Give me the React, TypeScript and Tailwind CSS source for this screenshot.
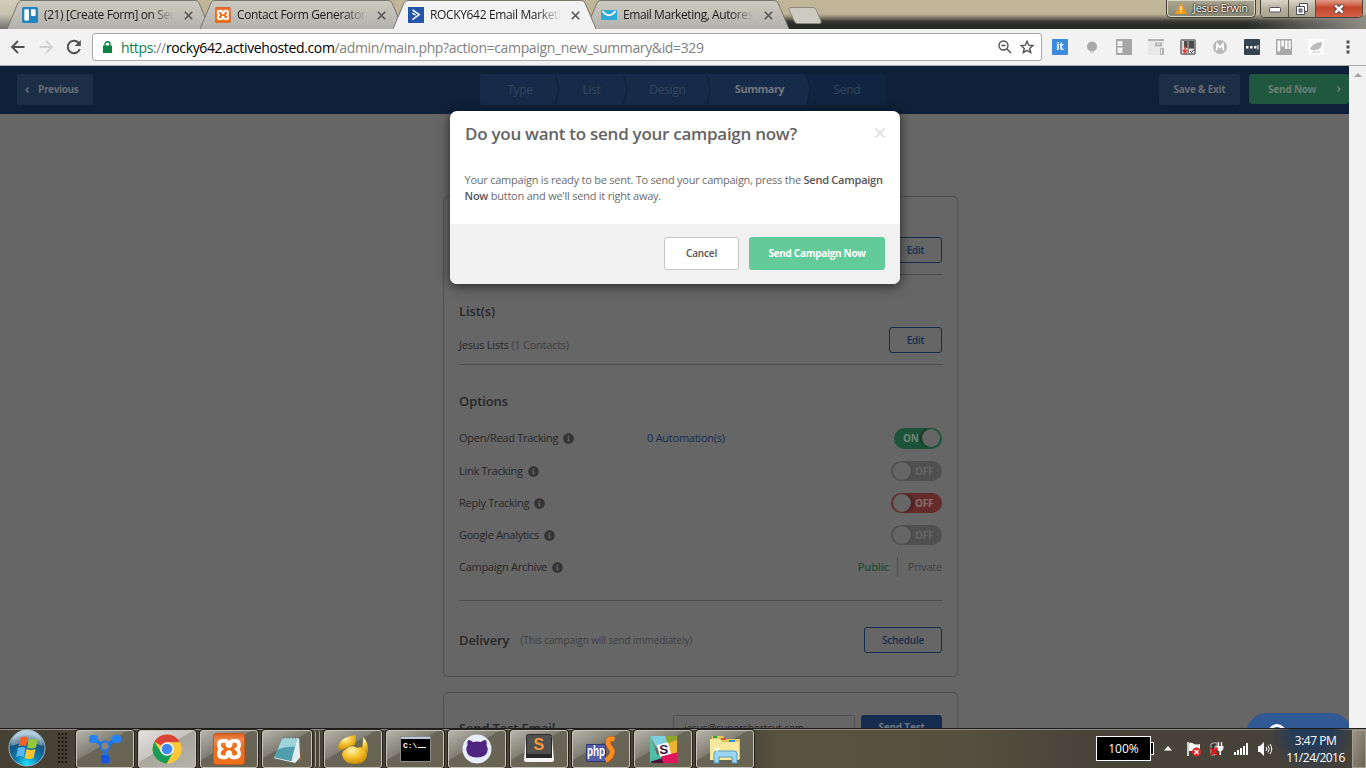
import React from "react";
import { FaInfoCircle } from "react-icons/fa";

const ui = "font-['Open_Sans','Noto_Sans',sans-serif]";

/* ---------- Small shared icons ---------- */

function TrelloIcon() {
  return (
    <svg viewBox="0 0 16 16" className="size-4 shrink-0">
      <rect width="16" height="16" rx="1.5" fill="#2484c0" />
      <rect x="2.3" y="2.3" width="4.6" height="11.2" rx="0.8" fill="#fff" />
      <rect x="9" y="2.3" width="4.6" height="6.6" rx="0.8" fill="#fff" />
    </svg>
  );
}

function XamppIcon({ size }: { size: number }) {
  return (
    <svg viewBox="0 0 32 32" width={size} height={size} className="shrink-0">
      <defs>
        <linearGradient id="xo" x1="0" y1="0" x2="0" y2="1">
          <stop offset="0" stopColor="#d9601f" />
          <stop offset="0.2" stopColor="#f08a4c" />
          <stop offset="0.45" stopColor="#ee6d1c" />
          <stop offset="1" stopColor="#f0701c" />
        </linearGradient>
      </defs>
      <rect x="0.5" y="0.5" width="31" height="31" rx="3" fill="url(#xo)" stroke="#c8591a" />
      <path
        d="M9.5 7.8h2.6q2.4 0 2.4 3.4 0 1.9 1.5 1.9t1.5-1.9q0-3.4 2.4-3.4h2.6q3.6 0 3.600 3.900 0 2.900-2 4.300 2 1.500 2 4.300 0 4-3.600 4h-2.800q-2.300 0-2.300-3.200 0-1.900-1.400-1.900t-1.400 1.900q0 3.200-2.300 3.200h-2.800q-3.600 0-3.600-4 0-2.800 2-4.300-2-1.400-2-4.300 0-3.900 3.600-3.900z"
        fill="none"
        stroke="#fff"
        strokeWidth="3.8"
      />
    </svg>
  );
}

function ActiveIcon() {
  return (
    <svg viewBox="0 0 16 16" className="size-4 shrink-0">
      <rect width="16" height="16" fill="#2356ab" />
      <path d="M4.5 2.8 11.2 7.6 4.5 12.6M4.3 6l3.2 2.2" fill="none" stroke="#fff" strokeWidth="1.5" />
    </svg>
  );
}

function MailIcon() {
  return (
    <svg viewBox="0 0 16 16" className="size-4 shrink-0">
      <rect y="3" width="16" height="10" fill="#2fa9d6" />
      <path d="M1.500 4Q8 12.500 14.500 4" fill="none" stroke="#fff" strokeWidth="1.900" />
    </svg>
  );
}

/* ---------- Browser window ---------- */

type TabProps = {
  icon: React.ReactNode;
  title: string;
  active?: boolean;
  className: string;
  titleClass: string;
};

function Tab({ icon, title, active, className, titleClass }: TabProps) {
  return (
    <div className={`relative flex h-[29px] shrink-0 items-center pt-px ${active ? "z-10" : ""} ${className}`}>
      <svg viewBox="0 0 204 29" preserveAspectRatio="none" className="absolute inset-0 -z-10 h-full w-full">
        <path d="M0 29 11 3Q12 .5 15 .5H189Q192 .5 193 3L204 29Z" fill={active ? "#f2f2f2" : "url(#tabfill)"} />
        <path d="M0 29 11 3Q12 .5 15 .5H189Q192 .5 193 3L204 29" fill="none" stroke="#777770" strokeWidth="1" />
      </svg>
      <span className="flex pl-[15px]">{icon}</span>
      <span
        className={`ml-[6px] overflow-hidden whitespace-nowrap text-[12px] text-[#1c1c1c] [mask-image:linear-gradient(90deg,#000_82%,transparent)] ${titleClass}`}
      >
        {title}
      </span>
      <svg viewBox="0 0 9 9" className="ml-[10px] size-[9px] shrink-0">
        <path d="m.8.8 7.4 7.4m0-7.4L.8 8.2" stroke="#555" strokeWidth="1.6" />
      </svg>
    </div>
  );
}

function WindowControls() {
  return (
    <div className="absolute right-[3px] top-0 flex items-start gap-[4px]">
      <div className="flex h-[18px] w-[90px] items-center rounded-b-[5px] border border-t-0 border-[#44413a] bg-linear-to-b from-[#aaa58f] to-[#8b8776] pb-px pl-[8px] shadow-[inset_0_0_0_1px_#d8d4c4]">
        <svg viewBox="0 0 12 11" className="h-[11px] w-[12px]">
          <path d="M6 0 12 11H0Z" fill="#f39a12" />
          <path d="M6 3.5v3.7M6 8.2v1.4" stroke="#fff" strokeWidth="1.3" />
        </svg>
        <span className="ml-[6px] whitespace-nowrap text-[11px] tracking-[-0.3px] text-white [text-shadow:0_0_2px_#000,0_0_2px_#000]">
          Jesus Erwin
        </span>
      </div>
      <div className="flex h-[18px] overflow-hidden rounded-b-[5px] border border-t-0 border-[#44413a] shadow-[inset_0_0_0_1px_#d8d4c4]">
        <div className="flex w-[28px] items-center justify-center border-r border-[#555145] bg-linear-to-b from-[#d8d5ca] via-[#b6b1a0] via-50% to-[#a8a390]">
          <svg viewBox="0 0 12 6" className="mt-[3px] h-[6px] w-[12px]">
            <rect x=".5" y=".5" width="11" height="4.5" rx="1" fill="#fff" stroke="#4d4f5c" />
          </svg>
        </div>
        <div className="flex w-[27px] items-center justify-center border-r border-[#555145] bg-linear-to-b from-[#d8d5ca] via-[#b6b1a0] via-50% to-[#a8a390]">
          <svg viewBox="0 0 12 12" className="size-[12px]">
            <path d="M3.5.5h8v8h-8z" fill="#fff" stroke="#4d4f5c" />
            <path d="M.5 3.5h8v8h-8z" fill="#fff" stroke="#4d4f5c" />
            <path d="M3 6h3v3H3z" fill="#aaa795" stroke="#4d4f5c" />
          </svg>
        </div>
        <div className="flex w-[46px] items-center justify-center bg-linear-to-b from-[#df9b87] via-[#c4452b] via-45% to-[#d2614a]">
          <svg viewBox="0 0 12 10" className="h-[10px] w-[12px]">
            <path d="m2 1 8 8m0-8L2 9" stroke="#4b3f46" strokeWidth="4.4" />
            <path d="m2.3 1.3 7.4 7.4m0-7.4L2.3 8.7" stroke="#fff" strokeWidth="2.6" />
          </svg>
        </div>
      </div>
    </div>
  );
}

function TabStrip() {
  return (
    <div className="relative isolate flex h-[29px] bg-[linear-gradient(180deg,#c2b699_0,#bfb397_14px,#8d8672_17px,#3d3c35_21px,#282a26_25px,#2b2d29_29px)] pl-[7px]">
      <div className="absolute right-0 top-[17px] -z-20 h-[12px] w-[120px] bg-linear-to-r from-transparent to-[#8e8d86]" />
      <div className="absolute left-0 top-0 -z-20 h-[29px] w-[20px] bg-linear-to-b from-[#d3cdba] via-[#c6c0ae] to-[#72736f]" />
      <svg className="absolute size-0">
        <defs>
          <linearGradient id="tabfill" x1="0" y1="0" x2="0" y2="1">
            <stop offset="0" stopColor="#cdcabf" />
            <stop offset="1" stopColor="#b2b1ad" />
          </linearGradient>
        </defs>
      </svg>
      <Tab icon={<TrelloIcon />} title="(21) [Create Form] on Sendpepper" className="w-[203px]" titleClass="w-[130px] tracking-[-0.4px]" />
      <Tab icon={<XamppIcon size={16} />} title="Contact Form Generator" className="-ml-[10px] w-[203px]" titleClass="w-[130px] tracking-[-0.35px]" />
      <Tab icon={<ActiveIcon />} title="ROCKY642 Email Marketing" active className="-ml-[10px] w-[203px]" titleClass="w-[131px] tracking-[-0.35px]" />
      <Tab icon={<MailIcon />} title="Email Marketing, Autoresponder" className="-ml-[10px] w-[203px]" titleClass="w-[131px] tracking-[-0.43px]" />
      <svg viewBox="0 0 34 17" className="-ml-px mt-[7px] h-[17px] w-[34px]">
        <path d="M3 .5H25Q27 .5 28 2.5L33 14Q34 16.5 31 16.5H9.500Q7.500 16.500 6.500 14.500L1 2.500Q.5.5 3 .5Z" fill="#cdcabf" stroke="#8d8a7d" />
      </svg>
      <WindowControls />
    </div>
  );
}

function Extensions() {
  return (
    <div className="flex items-center gap-4">
      <span className="flex size-4 items-center justify-center rounded-[1px] bg-[#3b8adb] pb-px text-[10px] font-bold text-white">it</span>
      <svg viewBox="0 0 16 16" className="size-4">
        <circle cx="8" cy="7.500" r="5" fill="#a9a9a9" />
        <path d="M6 12h4v2H6z" fill="#d5d5d5" />
      </svg>
      <svg viewBox="0 0 16 16" className="size-4">
        <path d="M0 0h16v16H0z" fill="#a5a5a5" />
        <path d="M1.500 2h5v5h-5zM1.500 8.500h5v5.500h-5z" fill="#f2f2f2" />
      </svg>
      <svg viewBox="0 0 16 16" className="size-4">
        <path d="M0 2h16v14H0z" fill="#e8e8e8" />
        <path d="M0 0h16v2H0zM7 3.500h7v4H7zM12 9h4v7h-4z" fill="#b5b5b5" />
        <path d="M9 5h3M13.500 10v5" stroke="#eee" />
      </svg>
      <svg viewBox="0 0 16 16" className="size-4">
        <rect width="16" height="16" rx="2" fill="#888" />
        <path d="M2 2h5.500v12H2z" fill="#d6d6d6" />
        <path d="M4 2h3.500v7H4zM9 2h5v7H9z" fill="#4c4c4c" />
        <path d="M9 10h5v4H9z" fill="#eee" />
        <path d="M5 7v6M3 11l2 3 2-3" stroke="#db4340" strokeWidth="1.500" fill="none" />
        <path d="m10 12 1.500 1.500L14 10.500" stroke="#333" fill="none" />
      </svg>
      <svg viewBox="0 0 16 16" className="size-4">
        <circle cx="8" cy="8" r="7" fill="#b8b8b8" />
        <path d="M4.500 11.500 5.200 5 8 8.500 10.800 5l.7 6.500" fill="none" stroke="#fff" strokeWidth="1.800" />
      </svg>
      <svg viewBox="0 0 16 16" className="size-4">
        <rect width="16" height="16" rx="1" fill="#344450" />
        <path d="M2 7h2.500v2.500H2zM6 7h2.500v2.500H6zM10 7h2.500v2.500H10zM13.500 6h1v4.500h-1z" fill="#fff" />
      </svg>
      <svg viewBox="0 0 16 16" className="size-4">
        <path d="M0 0h16v16H0z" fill="#a9a9a9" />
        <path d="M1.500 1.500h2.700v11H1.500zM5.300 1.500H8v6H5.300zM9 1.500h2.500V10H9zM12.500 1.500h2.200v8.500h-2.200z" fill="#f8f8f8" />
      </svg>
      <svg viewBox="0 0 16 16" className="size-4">
        <path d="M0 0h16v16H0z" fill="#fbfbfb" />
        <path d="M2 10Q4 4 14 3q0 7-6 8-4 .6-6-1Z" fill="#bdbdbd" />
        <path d="M4 13h8" stroke="#ddd" strokeWidth="1.500" />
      </svg>
    </div>
  );
}

function Toolbar() {
  return (
    <div className="flex h-[37px] items-center border-b border-[#a9aaac] bg-[#f2f2f2] pr-[16px]">
      <svg viewBox="0 0 16 16" className="ml-[10px] size-4">
        <path d="M14.500 8H2.500M8 2 2 8l6 6" fill="none" stroke="#505050" strokeWidth="1.800" />
      </svg>
      <svg viewBox="0 0 16 16" className="ml-[12px] size-4">
        <path d="M1.500 8h12M8 2l6 6-6 6" fill="none" stroke="#d0d0d0" strokeWidth="1.800" />
      </svg>
      <svg viewBox="0 0 16 16" className="ml-[12px] size-4">
        <path d="M13.800 10A6.200 6.200 0 1 1 12.500 3.800" fill="none" stroke="#505050" strokeWidth="2" />
        <path d="M14.800 1v6h-6z" fill="#505050" />
      </svg>
      <div className="ml-[10px] flex h-[28px] w-[950px] items-center rounded-[3px] border border-[#a9a9a9] bg-white pl-[10px] pr-[7px]">
        <svg viewBox="0 0 9 12" className="h-[12px] w-[9px]">
          <path d="M0 4.500h9V12H0z" fill="#0b8043" />
          <path d="M2 5V3.200a2.500 2.500 0 0 1 5 0V5" fill="none" stroke="#0b8043" strokeWidth="1.400" />
        </svg>
        <span className="ml-[9px] whitespace-nowrap text-[14px] tracking-[-0.36px] text-[#818181]">
          <span className="text-[#0b8043]">https</span>://
          <span className="text-black">rocky642.activehosted.com</span>/admin/main.php?action=campaign_new_summary&amp;id=329
        </span>
        <svg viewBox="0 0 14 14" className="ml-auto size-[14px]">
          <circle cx="5.500" cy="5.500" r="4.500" fill="none" stroke="#505050" strokeWidth="1.400" />
          <path d="M3.500 5.500h4M9 9l4 4" stroke="#505050" strokeWidth="1.500" />
        </svg>
        <svg viewBox="0 0 14 14" className="ml-[8px] size-[14px]">
          <path d="m7 1.300 1.700 3.900 4.200.4-3.200 2.800 1 4.200L7 10.400l-3.700 2.200 1-4.200L1.100 5.600l4.200-.4Z" fill="none" stroke="#505050" strokeWidth="1.400" />
        </svg>
      </div>
      <div className="ml-[10px]">
        <Extensions />
      </div>
      <svg viewBox="0 0 4 14" className="ml-auto h-[14px] w-[4px]">
        <path d="M.5.5h3v3h-3zM.5 5.500h3v3h-3zM.5 10.500h3v3h-3z" fill="#505050" />
      </svg>
    </div>
  );
}

/* ---------- Campaign page ---------- */

function Step({ label, className, last, current }: { label: string; className: string; last?: boolean; current?: boolean }) {
  return (
    <div
      className={`relative flex h-[31px] items-center justify-center ${last ? "bg-[#10253f]" : "bg-[#152b49]"} ${current ? "text-[11px] font-bold text-[#73777d]" : "text-[12px] text-[#34465c]"} ${className}`}
    >
      {label}
      {!last && (
        <svg viewBox="0 0 5 31" className="absolute -right-[4px] top-0 z-10 h-[31px] w-[5px]">
          <path d="M0 0 4 15.500 0 31Z" fill="#152b49" />
          <path d="M.5 0 4 15.500.5 31" fill="none" stroke="#0e2038" />
        </svg>
      )}
    </div>
  );
}

function PageHeader() {
  return (
    <header className="flex h-[48px] items-start bg-[#0f2139] pt-[8px] text-[10px] text-[#6f757c]">
      <button className="ml-[17px] flex h-[31px] w-[76px] items-center rounded-[3px] bg-[#1c2e46] pl-[8px] font-bold tracking-[-0.35px] text-[#686d73]">
        <svg viewBox="0 0 4 6" className="mr-[9px] h-[6px] w-[4px]">
          <path d="M3.500.5 1 3l2.500 2.500" fill="none" stroke="#777b80" strokeWidth="1.200" />
        </svg>
        Previous
      </button>
      <nav className="ml-[387px] flex tracking-[-0.3px]">
        <Step label="Type" className="w-[76px] rounded-l-[3px] pl-[4px]" />
        <Step label="List" className="w-[68px] pl-[3px]" />
        <Step label="Design" className="w-[83px] pl-[4px]" />
        <Step label="Summary" current className="w-[100px] pl-[5px] tracking-[-0.5px]" />
        <Step label="Send" last className="w-[79px] rounded-r-[3px] pl-px" />
      </nav>
      <button className="ml-auto h-[31px] w-[81px] rounded-[3px] bg-[#1c2e46] font-bold tracking-[-0.25px] text-[#686d73]">Save &amp; Exit</button>
      <button className="ml-[9px] flex h-[30px] w-[100px] items-center rounded-[3px] bg-[#20573f] pl-[19px] font-bold tracking-[-0.2px] text-[#6a7f74]">
        Send Now
        <svg viewBox="0 0 4 6" className="ml-auto mr-[8px] h-[6px] w-[4px]">
          <path d="M.5.5 3 3 .5 5.500" fill="none" stroke="#76877e" strokeWidth="1.200" />
        </svg>
      </button>
    </header>
  );
}

function OutlineButton({ label, className }: { label: string; className: string }) {
  return (
    <button className={`h-[26px] rounded-[3px] border border-[#172d4f] text-[10px] font-semibold text-[#172d4f] ${className}`}>{label}</button>
  );
}

type ToggleKind = "on" | "off" | "danger";

function Toggle({ kind }: { kind: ToggleKind }) {
  if (kind === "on") {
    return (
      <span className="flex h-[21px] w-[48px] items-center rounded-full bg-[#1c5339] pl-[9px] text-[10px] font-bold text-[#708479]">
        ON
        <span className="ml-auto mr-[2px] size-[18px] rounded-full bg-[#666] shadow-[-3px_0_2px_#163f2c]" />
      </span>
    );
  }
  return (
    <span
      className={`flex h-[20px] w-[51px] items-center rounded-full pl-[2px] text-[10px] font-bold ${kind === "off" ? "bg-[#505050] text-[#666]" : "bg-[#652b2b] text-[#86706f]"}`}
    >
      <span className={`mr-[4px] size-[18px] rounded-full bg-[#666] ${kind === "off" ? "shadow-[1px_0_1px_#484848]" : "shadow-[3px_0_2px_#4f2222]"}`} />
      OFF
    </span>
  );
}

function OptionRow({ label, extra, kind }: { label: string; extra?: string; kind?: ToggleKind }) {
  return (
    <div className="relative flex h-[32px] items-center">
      <span className="tracking-[-0.27px]">{label}</span>
      <FaInfoCircle className="ml-[5px] size-[11px] text-[#343434]" />
      {extra && <span className="absolute left-[188px] tracking-[-0.25px] text-[#172d4f]">{extra}</span>}
      <span className="ml-auto">
        {kind ? (
          <Toggle kind={kind} />
        ) : (
          <span className="flex h-[20px] items-center text-[#3f3f3f]">
            <b className="border-r border-[#505050] pr-[8px] leading-[20px] font-semibold text-[#1c4f37]">Public</b>
            <span className="pl-[10px]">Private</span>
          </span>
        )}
      </span>
    </div>
  );
}

function SummaryPanel() {
  return (
    <section className="mt-[82px] h-[481px] w-[515px] rounded-[5px] border border-[#505050] px-[15px] text-[11px] tracking-[-0.2px] text-[#262626]">
      <div className="flex h-[78px] items-end justify-end border-b border-[#4b4b4b] pb-[11px]">
        <OutlineButton label="Edit" className="w-[53px]" />
      </div>
      <h3 className="pt-[26px] text-[13px] leading-[20px] font-semibold tracking-[-0.1px]">List(s)</h3>
      <div className="flex h-[44px] items-start justify-between border-b border-[#4b4b4b] pt-[6px]">
        <span className="pt-[9px] leading-[18px] tracking-[-0.23px]">
          Jesus Lists <span className="text-[#3f3f3f]">(1 Contacts)</span>
        </span>
        <OutlineButton label="Edit" className="w-[53px]" />
      </div>
      <h3 className="pt-[26px] text-[13px] leading-[20px] font-semibold tracking-[-0.1px]">Options</h3>
      <div className="pt-[11px]">
        <OptionRow label="Open/Read Tracking" extra="0 Automation(s)" kind="on" />
        <div className="pt-px">
          <OptionRow label="Link Tracking" kind="off" />
          <OptionRow label="Reply Tracking" kind="danger" />
          <OptionRow label="Google Analytics" kind="off" />
          <OptionRow label="Campaign Archive" />
        </div>
      </div>
      <div className="mt-[17px] flex h-[79px] items-center border-t border-[#4b4b4b]">
        <h3 className="pt-[2px] text-[13px] font-semibold tracking-[-0.1px]">Delivery</h3>
        <span className="ml-[11px] pt-px text-[10px] tracking-[-0.12px] text-[#3f3f3f]">(This campaign will send immediately)</span>
        <OutlineButton label="Schedule" className="ml-auto w-[78px]" />
      </div>
    </section>
  );
}

function TestPanel() {
  return (
    <section className="mt-[15px] flex h-[120px] w-[515px] items-start rounded-[5px] border border-[#505050] px-[15px] pt-[22px] text-[#262626]">
      <h3 className="pt-[3px] text-[13px] leading-[20px] font-semibold tracking-[-0.15px]">Send Test Email</h3>
      <div className="ml-auto h-[27px] w-[182px] rounded-[3px] border border-[#505050] pl-[10px] pt-[3px] text-[10px] leading-[18px] tracking-[-0.05px] text-[#262626]">jesus@supershortcut.com</div>
      <button className="ml-[6px] h-[25px] w-[81px] rounded-[3px] bg-[#172d4f] text-[10px] font-bold tracking-[-0.2px] text-[#6f7782]">Send Test</button>
    </section>
  );
}

function Modal() {
  return (
    <div className="absolute left-[450px] top-[45px] z-20 h-[173px] w-[450px] overflow-hidden rounded-[7px] bg-white text-[#5b5b5b] shadow-[0_2px_12px_rgba(0,0,0,.65)]">
      <div className="h-[113px] px-[15px] pt-[11px]">
        <div className="flex justify-between">
          <h2 className="whitespace-nowrap text-[17px] leading-[24px] font-semibold tracking-[-0.27px] text-[#646464]">Do you want to send your campaign now?</h2>
          <svg viewBox="0 0 10 10" className="mt-[6px] size-[10px]">
            <path d="m.5.5 9 9m0-9-9 9" stroke="#d8d8d8" strokeWidth="1.500" />
          </svg>
        </div>
        <p className="-ml-[0.5px] mt-[26px] whitespace-nowrap text-[11px] leading-[16px] tracking-[-0.235px] text-[#6c6c6c]">
          Your campaign is ready to be sent. To send your campaign, press the <b className="font-semibold text-[#555]">Send Campaign</b>
          <br />
          <b className="font-semibold text-[#555]">Now</b> button and we'll send it right away.
        </p>
      </div>
      <div className="flex h-[60px] justify-end gap-[10px] bg-[#f1f1f1] pr-[15px] pt-[13px] text-[10px]">
        <button className="h-[33px] w-[75px] rounded-[3px] border border-[#c5c5c5] bg-white font-semibold tracking-[-0.15px] text-[#555]">Cancel</button>
        <button className="h-[33px] w-[136px] rounded-[3px] bg-[#62cb99] font-bold tracking-[-0.3px] text-white">Send Campaign Now</button>
      </div>
    </div>
  );
}

/* ---------- Taskbar ---------- */

function TaskButton({ children, className = "w-[58px]", active }: { children: React.ReactNode; className?: string; active?: boolean }) {
  return (
    <div
      className={`flex h-[38px] shrink-0 items-center justify-center rounded-[3px] border border-[#c6c3ba] shadow-[0_0_0_1px_#24221c] ${active ? "bg-[linear-gradient(150deg,#e2e1df_0,#c6c4bf_45%,#a9a69d_46%,#b5b2a8_100%)]" : "bg-[linear-gradient(150deg,#b6b3ab_0,#817e73_42%,#69665a_43%,#66634f_100%)]"} ${className}`}
    >
      {children}
    </div>
  );
}

function StartOrb() {
  return (
    <svg viewBox="0 0 38 38" className="size-[38px]">
      <defs>
        <radialGradient id="orb" cx=".5" cy=".95" r=".85">
          <stop offset="0" stopColor="#1fe2ff" />
          <stop offset=".4" stopColor="#0c7cad" />
          <stop offset=".8" stopColor="#174f7a" />
          <stop offset="1" stopColor="#8eb4cb" />
        </radialGradient>
      </defs>
      <circle cx="19" cy="19" r="18" fill="url(#orb)" stroke="#9fb6c4" />
      <path d="M3 17a16 16 0 0 1 32 0q-16-7-32 0Z" fill="#fff" opacity=".35" />
      <path d="M12.500 8.500q4-2 7.500 0l-2 9q-3.500-2-7.500 0Z" fill="#f0622c" />
      <path d="M21 9.500q4.500 2 9 0l-2 9q-4.500 2-9 0Z" fill="#95c93d" />
      <path d="M10 19q4-2 7.500 0l-2 9q-3.500-2-7.500 0Z" fill="#56b8ef" />
      <path d="M18.500 20q4.500 2 9 0l-2 9q-4.500 2-9 0Z" fill="#fdc62d" />
    </svg>
  );
}

function ChromeLogo() {
  return (
    <svg viewBox="0 0 30 30" className="size-[30px]">
      <circle cx="15" cy="15" r="14.500" fill="#fdc93a" />
      <path d="M15 15 2.400 7.800A14.500 14.500 0 0 1 27.800 8.200L15 8.200Z" fill="#da4437" />
      <path d="M2.400 7.800A14.500 14.500 0 0 0 15 29.500L21 18.500 15 15 9 18.300Z" fill="#179c5a" />
      <path d="M15 8.200H27.800A14.500 14.500 0 0 1 15 29.500L21 18.500Z" fill="#fdc93a" />
      <circle cx="15" cy="15" r="6.800" fill="#f4f4f4" />
      <circle cx="15" cy="15" r="5.300" fill="#4285f4" />
    </svg>
  );
}

function Taskbar() {
  return (
    <footer className="relative z-30 flex h-[40px] shrink-0 items-start border-t border-[#1e1c18] bg-[linear-gradient(90deg,#454135_0,#4b4739_55%,#59523f_57%,#575040_70%,#48443a_79%,#454138_100%)] shadow-[inset_0_1px_0_#8f8c82]">
      <div className="ml-[8px]"><StartOrb /></div>
      <svg viewBox="0 0 9 30" className="ml-[12px] mt-[4px] h-[30px] w-[9px]">
        {[0, 4, 8, 12, 16, 20, 24, 28].map((y) => (
          <path key={y} d={`M0 ${y}h2v1.800h-2zM3.500 ${y}h2v1.800h-2zM7 ${y}h2v1.800h-2z`} fill="#16150f" />
        ))}
      </svg>
      <div className="ml-[9px] flex gap-[4px] pt-px">
        <TaskButton>
          <svg viewBox="0 0 34 30" className="h-[30px] w-[34px]">
            <path d="M6 5 14 11M28 5 20 11M17 15v11" stroke="#2274e8" strokeWidth="4" />
            <circle cx="17" cy="12" r="4.500" fill="#8a877a" stroke="#2274e8" strokeWidth="2" />
            <rect x="1" y="1" width="9" height="8" rx="3" fill="#2483f4" />
            <rect x="24" y="1" width="9" height="8" rx="3" fill="#2483f4" />
            <rect x="13" y="21" width="8.500" height="8.500" rx="3" fill="#1557e0" />
          </svg>
        </TaskButton>
        <TaskButton active><ChromeLogo /></TaskButton>
        <TaskButton><XamppIcon size={32} /></TaskButton>
        <div className="flex">
          <TaskButton className="w-[50px]">
            <svg viewBox="0 0 32 30" className="size-[31px]">
              <path d="m26 4 5 22-4 2Z" fill="#84693c" />
              <path d="M11 3h17l1 20-5 6-22-5Z" fill="#e2edee" />
              <path d="M11 3h15l-6 24-18-4Z" fill="#4f9eae" />
              <path d="M11 3h15l-2 9Q13 12 6 15Z" fill="#9fd3da" />
              <path d="M12 1v3m3-3v3m3-3v3m3-3v3m3-3v3m3-3v3" stroke="#777" />
            </svg>
          </TaskButton>
          <div className="h-[38px] w-[4px] rounded-r-[3px] border-r border-[#a4a196]" />
          <div className="h-[38px] w-[4px] rounded-r-[3px] border-r border-[#a4a196]" />
        </div>
        <TaskButton>
          <svg viewBox="0 0 32 30" className="h-[30px] w-[32px]">
            <defs>
              <radialGradient id="gold" cx=".4" cy=".25" r=".8">
                <stop offset="0" stopColor="#fff3bb" />
                <stop offset=".45" stopColor="#f7c52f" />
                <stop offset="1" stopColor="#c98707" />
              </radialGradient>
            </defs>
            <path d="M19 1Q1 3 1 15q5 2 8-1 6-3 9-3 1-5 1-10Z" fill="url(#gold)" />
            <path d="M26 3q6 5 5 16-3-1-6-5 1-5 1-11Z" fill="url(#gold)" />
            <path d="M16 12q-4 0-7 3-4 2-4 6 2 9 13 9t12-9q0-5-6-8-4 2-8-1Z" fill="url(#gold)" />
          </svg>
        </TaskButton>
        <TaskButton>
          <svg viewBox="0 0 31 26" className="h-[26px] w-[31px]">
            <path d="M.5.500h30v25H.5z" fill="#000" stroke="#8c8c8c" />
            <path d="M1 1h29v2H1z" fill="#b8c8df" />
            <text x="3" y="12" fill="#fff" fontSize="8" fontFamily="Liberation Mono" fontWeight="bold">C:\</text>
            <path d="M18 11.500h8" stroke="#fff" />
          </svg>
        </TaskButton>
        <TaskButton>
          <svg viewBox="0 0 30 30" className="size-[30px]">
            <circle cx="15" cy="15" r="14.500" fill="#e8eef9" />
            <path d="M6 6q3 0 5 2 4-1 8 0 2-2 5-2 1 3 .5 5Q26 13 25.500 17q-1 6-10.500 6.500Q5.500 23 4.500 17 4 13 5.500 11 5 9 6 6Z" fill="#4e2681" />
          </svg>
        </TaskButton>
        <TaskButton>
          <svg viewBox="0 0 32 30" className="mb-[3px] h-[30px] w-[32px]">
            <path d="M3 3h26l2 24q0 2-2 2H3q-2 0-2-2Z" fill="#f5f5f5" />
            <path d="M3 19h26v6H3z" fill="#282828" />
            <rect x="3.500" y="1.500" width="25" height="20" rx="2" fill="#505050" stroke="#282828" />
            <text x="10.500" y="17" fontSize="16" fontWeight="bold" fontFamily="Liberation Sans" fill="#ff983a">S</text>
          </svg>
        </TaskButton>
        <TaskButton>
          <svg viewBox="0 0 32 28" className="h-[28px] w-[32px]">
            <path d="M1.500 9.500h19v17h-19z" fill="#535da8" stroke="#303877" />
            <path d="M29 4.500q-6-2-6 3 0 3 3 6 2.500 3 .5 6.500-2 4-5.500 5.500" fill="none" stroke="#bb5510" strokeWidth="5.500" />
            <path d="M29.500 4.300q-6.500-2-6.500 3 0 3 3 6 2.500 3 .5 6.500-2 4-6 5.500" fill="none" stroke="#fb8e22" strokeWidth="4.500" />
            <text x="2" y="21" fontSize="14" fontWeight="bold" fontFamily="Liberation Sans" textLength="18" lengthAdjust="spacingAndGlyphs" fill="#fff">php</text>
          </svg>
        </TaskButton>
        <TaskButton>
          <svg viewBox="0 0 30 30" className="size-[29px]">
            <path d="M1 1h17l2 8L8 13Z" fill="#7fd0de" />
            <path d="M1 1 9 22l-8 4Z" fill="#4fc2a5" />
            <path d="M17 1h12v4l-10 6Z" fill="#8fa62b" />
            <path d="M29 5v15l-7 1-3-12Z" fill="#eab42c" />
            <path d="M29 18v11H13l-2-7Z" fill="#e0175a" />
            <path d="m1 25 9-5 4 5-10 4H1Z" fill="#48bda4" />
            <path d="M2 27.500 13 24l2 5H2z" fill="#50113a" />
            <path d="M8 10.500 19.500 7.500l3.500 12-11.500 3Z" fill="#fff" />
            <text x="10.500" y="20" fontSize="14" fontWeight="bold" fontFamily="Liberation Sans" fill="#39153d">S</text>
          </svg>
        </TaskButton>
        <TaskButton>
          <svg viewBox="0 0 32 30" className="h-[30px] w-[32px]">
            <path d="M3 2h11l2 3h15v20H3Z" fill="#e6c75f" />
            <path d="M1 5h10l2 3h17v18H1Z" fill="#f7e89c" />
            <path d="M4 2h4v2H4z" fill="#21aa3d" />
            <path d="M12 4h5v2h-5z" fill="#d9542e" />
            <path d="M20 6h6v2h-6z" fill="#2b8edc" />
            <path d="M5 29V20q0-3 3-3h17q3 0 3 3v9h-5v-6H10v6Z" fill="#9bd5ef" stroke="#4d9dc1" />
            <path d="M8 12v6M5 15h6" stroke="#fff" />
          </svg>
        </TaskButton>
      </div>
      <div className="relative ml-auto flex h-[39px] items-center">
        <div className="flex h-[25px] w-[55px] items-center justify-center border border-white bg-black text-[12px] text-white">100%</div>
        <div className="h-[13px] w-[3px] border border-l-0 border-white bg-black" />
        <svg viewBox="0 0 8 5" className="ml-[10px] h-[5px] w-[8px]"><path d="M4 0 8 4.500H0Z" fill="#fff" /></svg>
        <svg viewBox="0 0 16 16" className="ml-[14px] size-4">
          <path d="M2 1v14" stroke="#fff" strokeWidth="1.500" />
          <path d="M3 2q3-1 5 1 3 1 6 0v7H3Z" fill="#fff" />
          <circle cx="10.500" cy="11" r="4.500" fill="#d92a2b" />
          <path d="m8.500 9 4 4m0-4-4 4" stroke="#fff" strokeWidth="1.300" />
        </svg>
        <svg viewBox="0 0 16 16" className="ml-[7px] size-4">
          <path d="M4 2h4v3H6v9H2V3Z" fill="#363636" stroke="#eee" strokeWidth=".7" />
          <path d="M9.500 1v4m3-4v4" stroke="#fff" strokeWidth="1.300" />
          <path d="M7.500 5h7v2q-.5 3-2.500 3.300V14h-1.500v-3.700Q8 10 7.500 7Z" fill="#fff" />
          <path d="m1.500 7 7 7m0-7-7 7" stroke="#ed1111" strokeWidth="2" />
        </svg>
        <svg viewBox="0 0 16 12" className="ml-[8px] h-[12px] w-[16px]">
          <path d="M1 9h2v3H1zM4 7h2v5H4zM7 5h2v7H7zM10 3h2v9h-2zM13 0h2v12h-2z" fill="#fff" />
        </svg>
        <svg viewBox="0 0 16 14" className="ml-[8px] h-[14px] w-[16px]">
          <path d="M1 4h2l4-4v14l-4-4H1Z" fill="#fff" />
          <path d="M9 5q1.500 2 0 4M11 3.500q2.500 3.500 0 7M13 2q3.500 5 0 10" fill="none" stroke="#fff" />
        </svg>
        <div className="-my-px flex h-[40px] w-[78px] flex-col items-center justify-center bg-[radial-gradient(ellipse_at_top,#263b57_35%,transparent_80%)] pl-[7px] text-[12px] leading-[17px] tracking-[-0.5px] text-white">
          <span>3:47 PM</span>
          <span>11/24/2016</span>
        </div>
        <div className="ml-px h-[38px] w-[14px] border border-[#a49e91] bg-linear-to-br from-[#9d9689] to-[#6b6355]" />
      </div>
    </footer>
  );
}

export default function App() {
  return (
    <div className={`flex h-[768px] w-[1366px] flex-col overflow-hidden bg-[#666] ${ui}`}>
      <TabStrip />
      <Toolbar />
      <div className="relative flex h-[662px] min-h-0">
        <main className="relative h-[662px] w-[1349px] overflow-hidden bg-[#666]">
          <PageHeader />
          <div className="ml-[443px] w-[515px]">
            <SummaryPanel />
            <TestPanel />
          </div>
          <div className="absolute left-[1246px] top-[647px] flex h-[42px] w-[106px] justify-center rounded-full bg-[#315a95] pt-[11px]">
            <span className="mr-[44px] size-[18px] rounded-full border-[3px] border-white" />
          </div>
        </main>
        <div className="flex w-[17px] justify-center bg-[#f1f1f1] pt-[7px]">
          <svg viewBox="0 0 8 4" className="h-[4px] w-[8px]"><path d="M4 0 8 4H0Z" fill="#a3a3a3" /></svg>
        </div>
        <Modal />
      </div>
      <Taskbar />
    </div>
  );
}
